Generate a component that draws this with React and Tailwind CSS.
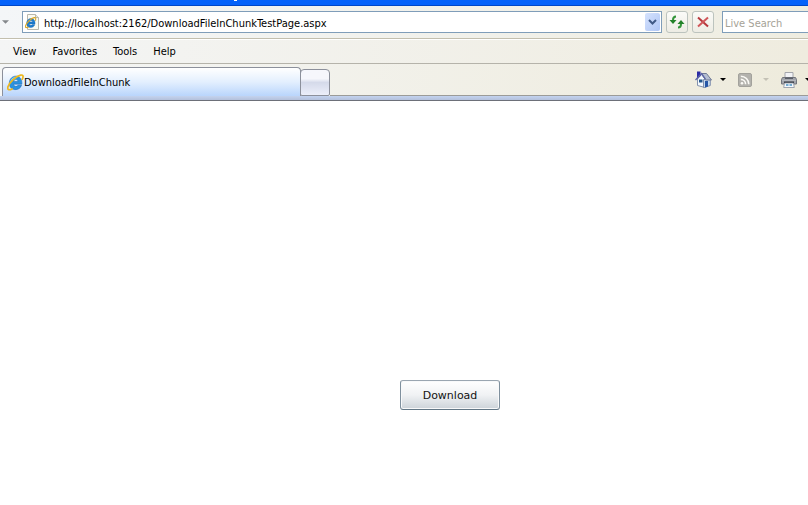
import React from "react";

function IELogo({ className }) {
  return (
    <svg className={className} viewBox="0 0 16 16" aria-hidden="true">
      <path d="M14 9.600H6.200c.2 2.300 3 2.700 4.100 1h3.400c-1 2.900-3.400 4.300-6.200 4.100C4 14.400 2 11.800 2.200 8.300 2.400 4.600 5 2 8.400 2c3.700 0 6 3 5.600 7.600zM6.200 7.100h4.200C10.100 4.700 6.800 4.600 6.200 7.100z" fill="#2a93e0" stroke="#1462b4" strokeWidth=".5" />
      <path d="M3.400 8C3.800 5.200 5.800 3.300 8.600 3.200" fill="none" stroke="#7fd2f8" strokeWidth="1.200" />
      <path d="M14.300 5C15.800 2.200 15.200.6 12.800 1 8.500 1.900 2.300 7.700.9 12c-.8 2.700.7 3.600 3.900 2.100" fill="none" stroke="#edb81f" strokeWidth="1.600" strokeLinecap="round" />
    </svg>
  );
}

function PageIcon() {
  return (
    <svg className="h-4 w-4 shrink-0" viewBox="0 0 16 16" aria-hidden="true">
      <path d="M2.500.5h8l3 3v12h-11z" fill="#fbfaf1" stroke="#b9b8ae" />
      <path d="M10.500.5v3h3" fill="#e8e8de" stroke="#b9b8ae" />
      <svg x="0" y="3" width="11.500" height="11.500" viewBox="0 0 16 16">
        <path d="M14 9.600H6.200c.2 2.300 3 2.700 4.100 1h3.400c-1 2.900-3.400 4.300-6.200 4.100C4 14.400 2 11.800 2.200 8.300 2.400 4.600 5 2 8.400 2c3.700 0 6 3 5.600 7.600zM6.200 7.100h4.200C10.100 4.700 6.800 4.600 6.200 7.100z" fill="#1f7dcc" stroke="#1462b4" strokeWidth=".5" />
        <path d="M14.300 5C15.800 2.200 15.200.6 12.800 1 8.500 1.900 2.300 7.700.9 12c-.8 2.700.7 3.600 3.900 2.100" fill="none" stroke="#d9a92c" strokeWidth="1.700" />
      </svg>
    </svg>
  );
}

function Caret({ className }) {
  return (
    <svg className={className} viewBox="0 0 6 3" aria-hidden="true">
      <path d="M0 0h6L3 3z" fill="currentColor" />
    </svg>
  );
}

function HomeIcon() {
  return (
    <svg className="h-[17px] w-[17px]" viewBox="0 0 17 17" aria-hidden="true">
      <path d="M2.500 8 6.500 3.500 10 8v8.500l-7.500-2z" fill="#f3f8fd" stroke="#8190ad" />
      <path d="M8.500 8.500h6.800v6l-5.800 2h-1z" fill="#c5d9ee" stroke="#8190ad" />
      <path d="M6.500 2.500h5L16.500 9h-6z" fill="#b4bed2" stroke="#6f7994" />
      <path d="M2 .5h3.500V5L2 8z" fill="#2b2ba6" />
      <path d="M.5 9 6.500 2.500l4 5.500" fill="none" stroke="#5b62a8" strokeWidth="1.200" />
      <path d="M4 8.500h3.500v3H4z" fill="#24588e" />
      <path d="M10 10h3v5.500l-3 1z" fill="#2657a6" />
    </svg>
  );
}

function FeedIcon() {
  return (
    <svg className="h-[14px] w-[14px]" viewBox="0 0 14 14" aria-hidden="true">
      <rect x=".5" y=".5" width="13" height="13" rx="1.500" fill="#b3b2ad" stroke="#a3a29c" />
      <circle cx="4" cy="10.200" r="1.300" fill="#fbfaf6" />
      <path d="M2.800 6.400a4.800 4.800 0 0 1 4.800 4.800M2.800 3.200a8 8 0 0 1 8 8" fill="none" stroke="#fbfaf6" strokeWidth="1.600" />
    </svg>
  );
}

function PrinterIcon() {
  return (
    <svg className="h-4 w-4" viewBox="0 0 16 16" aria-hidden="true">
      <path d="M4 .5h8v6H4z" fill="#f2f3f6" stroke="#a4a6ac" />
      <path d="M1.500 5.500h13l1 2v4.500H.5V7.500z" fill="#a3a6ac" stroke="#74777e" />
      <path d="M4 5.500h8v1.500H4z" fill="#5b5f68" />
      <path d="M1 8.500h14" stroke="#b4b7bd" />
      <path d="M3 9.500h10v1.500H3z" fill="#31353e" />
      <path d="M3.500 11h9l.8 4.500H2.700z" fill="#f3f8fd" stroke="#8b929e" strokeWidth=".8" />
      <path d="M5 13h2.500M8.500 13H11" stroke="#4d94c4" strokeWidth="1.500" />
    </svg>
  );
}

const toolButton =
  "flex h-[22px] w-[22px] shrink-0 items-center justify-center rounded-[3px] border border-[#bcc3be] bg-linear-to-b from-[#fbfbf8] to-[#edece4]";

export default function App() {
  return (
    <div className="min-h-screen overflow-hidden bg-white font-['DejaVu_Sans_Condensed','DejaVu_Sans',sans-serif] text-[11px] text-black">
      <header>
        <div className="flex h-[6px] items-start border-b border-[#0047c8] bg-[#0562fa]">
          <span className="ml-[234px] h-px w-[3px] bg-white" />
        </div>

        <div className="flex h-[33px] items-center border-b border-[#c3bfae] bg-linear-to-r from-[#f4f6f8] to-[#efede1]">
          <button type="button" aria-label="Recent pages" className="flex h-[22px] w-[22px] shrink-0 items-center pl-[2px] text-[#85888c]">
            <Caret className="h-1 w-[7px]" />
          </button>
          <div className="flex h-[22px] min-w-0 flex-1 items-center border border-[#7f9db9] bg-white pl-[2px]">
            <PageIcon />
            <input
              type="text"
              aria-label="Address"
              defaultValue="http://localhost:2162/DownloadFileInChunkTestPage.aspx"
              className="h-full min-w-0 flex-1 pt-[2px] pl-[3px] outline-none"
            />
            <button type="button" aria-label="Show addresses" className="mr-px flex h-[18px] w-[15px] shrink-0 items-center justify-center rounded-[2px] bg-linear-to-br from-[#d5e2fd] to-[#afc6f5]">
              <svg className="h-[6px] w-[9px]" viewBox="0 0 9 6" aria-hidden="true">
                <path d="m1 1 3.500 3.500L8 1" fill="none" stroke="#405a86" strokeWidth="2" />
              </svg>
            </button>
          </div>
          <div className="flex shrink-0 gap-1 px-1">
            <button type="button" aria-label="Refresh" className={toolButton}>
              <svg className="h-[14px] w-4" viewBox="0 0 16 14" aria-hidden="true">
                <path d="M7 1.500C4.800 1.500 4 2.500 4 5M9 12.500c2.200 0 3-1 3-3.500" fill="none" stroke="#34953a" strokeWidth="2" />
                <path d="M.5 5h7L4 9zM8.500 9h7L12 5z" fill="#238229" />
              </svg>
            </button>
            <button type="button" aria-label="Stop" className={toolButton}>
              <svg className="h-3 w-3" viewBox="0 0 12 12" aria-hidden="true">
                <path d="m1 1.500 10 9" stroke="#b8383d" strokeWidth="2" />
                <path d="m11 1.500-10 9" stroke="#d0575a" strokeWidth="2" />
              </svg>
            </button>
          </div>
          <input
            type="text"
            aria-label="Live Search"
            placeholder="Live Search"
            className="ml-1 h-[22px] w-[86px] shrink-0 border border-r-0 border-[#7f9db9] bg-white pt-[2px] pl-[2px] outline-none placeholder:text-[#a5a297]"
          />
        </div>

        <nav className="flex h-[25px] items-center gap-4 border-t border-b border-t-white border-b-[#b5b3aa] bg-linear-to-r from-[#f4f5f5] to-[#efecdf] pt-[2px] pl-[13px]">
          <button type="button">View</button>
          <button type="button">Favorites</button>
          <button type="button">Tools</button>
          <button type="button">Help</button>
        </nav>

        <div className="flex h-8 items-end bg-linear-to-r from-[#f5f6f6] to-[#eeebdc] pl-[2px]">
          <button type="button" className="flex h-[29px] w-[299px] shrink-0 items-center rounded-t-[4px] border border-b-0 border-[#8c909b] bg-linear-to-b from-white via-[#e3effe] to-[#b9d5fc] pl-1">
            <IELogo className="h-[17px] w-[17px] shrink-0" />
            <span className="pt-[2px]">DownloadFileInChunk</span>
          </button>
          <button type="button" aria-label="New tab" className="-ml-px h-[27px] w-[30px] shrink-0 rounded-t-[4px] rounded-b-[2px] border border-[#8c909b] bg-linear-to-b from-[#f6f7fc] from-35% via-[#d5daea] via-50% to-[#eceffa]" />
          <div className="flex h-8 min-w-0 flex-1 items-center justify-end border-b border-[#9b9b98]">
            <button type="button" aria-label="Home" className="flex items-center gap-2">
              <HomeIcon />
              <Caret className="h-[3px] w-[6px]" />
            </button>
            <button type="button" aria-label="Feeds" className="ml-3 flex items-center gap-[11px] text-[#c4c1b5]">
              <FeedIcon />
              <Caret className="h-[3px] w-[6px]" />
            </button>
            <button type="button" aria-label="Print" className="ml-3 flex items-center gap-2">
              <PrinterIcon />
              <Caret className="-mr-[3px] h-[3px] w-[6px]" />
            </button>
          </div>
        </div>
        <div className="h-[5px] border-b border-[#6d7079] bg-linear-to-b from-[#c3d3ef] to-[#b4c1dc]" />
      </header>

      <main className="flex justify-center pt-[279px] pl-[92px]">
        <button type="button" className="h-[30px] w-[100px] rounded-[3px] border border-t-[#9aa6b1] border-r-[#7f909e] border-b-[#627786] border-l-[#7f909e] bg-linear-to-b from-white via-[#f0f2f4] to-[#ccd3d9] pt-[2px] font-['DejaVu_Sans',sans-serif] text-[#111111] inset-shadow-[0_0_0_1px_#f8f9fa]">
          Download
        </button>
      </main>
    </div>
  );
}
